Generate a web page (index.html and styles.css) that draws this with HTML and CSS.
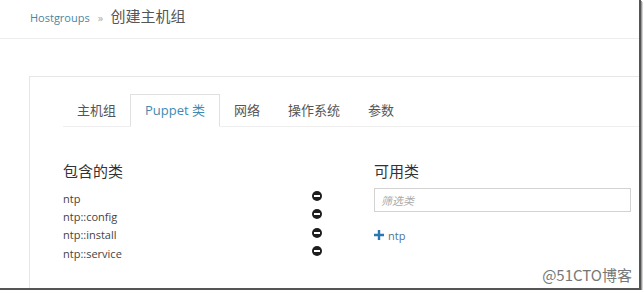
FILE: index.html
```html
<!DOCTYPE html>
<html>
<head>
        <title>创建主机组</title>
        <link rel="stylesheet" href="styles.css">
</head>
<body>
        <div class="frame">
                <!--Breadcrumb-->
                <div class="breadcrumb">
                        <a href="#" class="crumb">Hostgroups</a>
                        <span class="sep">&raquo;</span>
                        <span class="current">创建主机组</span>
                </div>

                <!--Form panel-->
                <div class="panel">
                        <ul class="tabs">
                                <li class="tab">主机组</li>
                                <li class="tab active">Puppet 类</li>
                                <li class="tab">网络</li>
                                <li class="tab">操作系统</li>
                                <li class="tab">参数</li>
                        </ul>

                        <div class="tab-content">
                                <div class="col">
                                        <h3>包含的类</h3>
                                        <ul class="class-list">
                                                <li><span>ntp</span><i class="remove"></i></li>
                                                <li><span>ntp::config</span><i class="remove"></i></li>
                                                <li><span>ntp::install</span><i class="remove"></i></li>
                                                <li><span>ntp::service</span><i class="remove"></i></li>
                                        </ul>
                                </div>
                                <div class="col">
                                        <h3>可用类</h3>
                                        <input class="filter" type="text" placeholder="筛选类">
                                        <a href="#" class="add">
                                                <svg width="10" height="10" viewBox="0 0 10 10"><path d="M3.8 0h2.4v3.8H10v2.4H6.2V10H3.8V6.2H0V3.8h3.8z" fill="#2b78b0"/></svg>
                                                <span>ntp</span>
                                        </a>
                                </div>
                        </div>
                </div>

                <div class="watermark">@51CTO博客</div>
        </div>
</body>
</html>
```

FILE: styles.css
```css
body {
    margin: 0;
    background: white;
    font-family: "Open Sans", "Noto Sans CJK SC", sans-serif;
    color: #333;
}

/* screenshot frame with dark edge */
.frame {
    position: relative;
    width: 639px;
    height: 288px;
    display: flex;
    flex-direction: column;
    overflow: hidden;
    border-right: 2px solid #555;
    border-bottom: 2px solid #555;
    box-shadow: 1px 1px 0 #999, 2px 2px 0 #d5d5d5;
}

/* Breadcrumb */
.breadcrumb {
    height: 39px;
    box-sizing: border-box;
    padding: 6px 0 0 30px;
    line-height: 20px;
    border-bottom: 1px solid #ededed;
}
.crumb {
    color: #4a86a3;
    font-size: 11px;
    text-decoration: none;
}
.sep {
    color: #aaa;
    font-size: 11px;
    margin: 0 3px 0 4px;
}
.current {
    color: #555;
    font-size: 15px;
}

/* Panel */
.panel {
    flex: 1;
    margin: 37px 0 0 29px;
    padding: 17px 0 0 33px;
    border-top: 1px solid #e6e6e6;
    border-left: 1px solid #e6e6e6;
}

/* Tabs */
.tabs {
    display: flex;
    list-style: none;
    margin: 0;
    padding: 0;
    border-bottom: 1px solid #efefef;
}
.tab {
    padding: 1px 14px 0;
    line-height: 31px;
    font-size: 13px;
    color: #555;
}
.tab.active {
    padding: 0 14px;
    color: #3f8ab0;
    background: white;
    border: 1px solid #e0e0e0;
    border-bottom-color: white;
    margin-bottom: -1px;
}

/* Tab content */
.tab-content {
    display: grid;
    grid-template-columns: 259px 257px;
    column-gap: 52px;
    padding-top: 34px;
}
.col h3 {
    margin: 0;
    font-size: 15px;
    font-weight: normal;
    line-height: 20px;
    color: #333;
}

.class-list {
    list-style: none;
    margin: 8px 0 0;
    padding: 0;
}
.class-list li {
    display: flex;
    align-items: center;
    justify-content: space-between;
    height: 18.3px;
    font-size: 11px;
    color: #444;
}
.remove {
    position: relative;
    width: 10px;
    height: 10px;
    border-radius: 50%;
    background: #1e1e1e;
    margin-bottom: 4px;
}
.remove::after {
    content: "";
    position: absolute;
    left: 2px;
    top: 4px;
    width: 6px;
    height: 2px;
    background: white;
}

.filter {
    display: block;
    box-sizing: border-box;
    width: 257px;
    height: 24px;
    margin-top: 7px;
    padding: 0 6px;
    border: 1px solid #d2d2d2;
    font-family: "Open Sans", "Noto Sans CJK SC", sans-serif;
    font-size: 11px;
}
.filter::placeholder {
    color: #aaa;
    font-style: italic;
}

.add {
    display: flex;
    align-items: center;
    gap: 4px;
    margin-top: 14px;
    height: 18px;
    font-size: 11px;
    color: #4b7595;
    text-decoration: none;
}

/* watermark */
.watermark {
    position: absolute;
    right: 7px;
    top: 264px;
    font-family: "Noto Sans CJK SC", sans-serif;
    font-size: 15px;
    color: #777;
    text-shadow: 0 0 2px white;
}
```
